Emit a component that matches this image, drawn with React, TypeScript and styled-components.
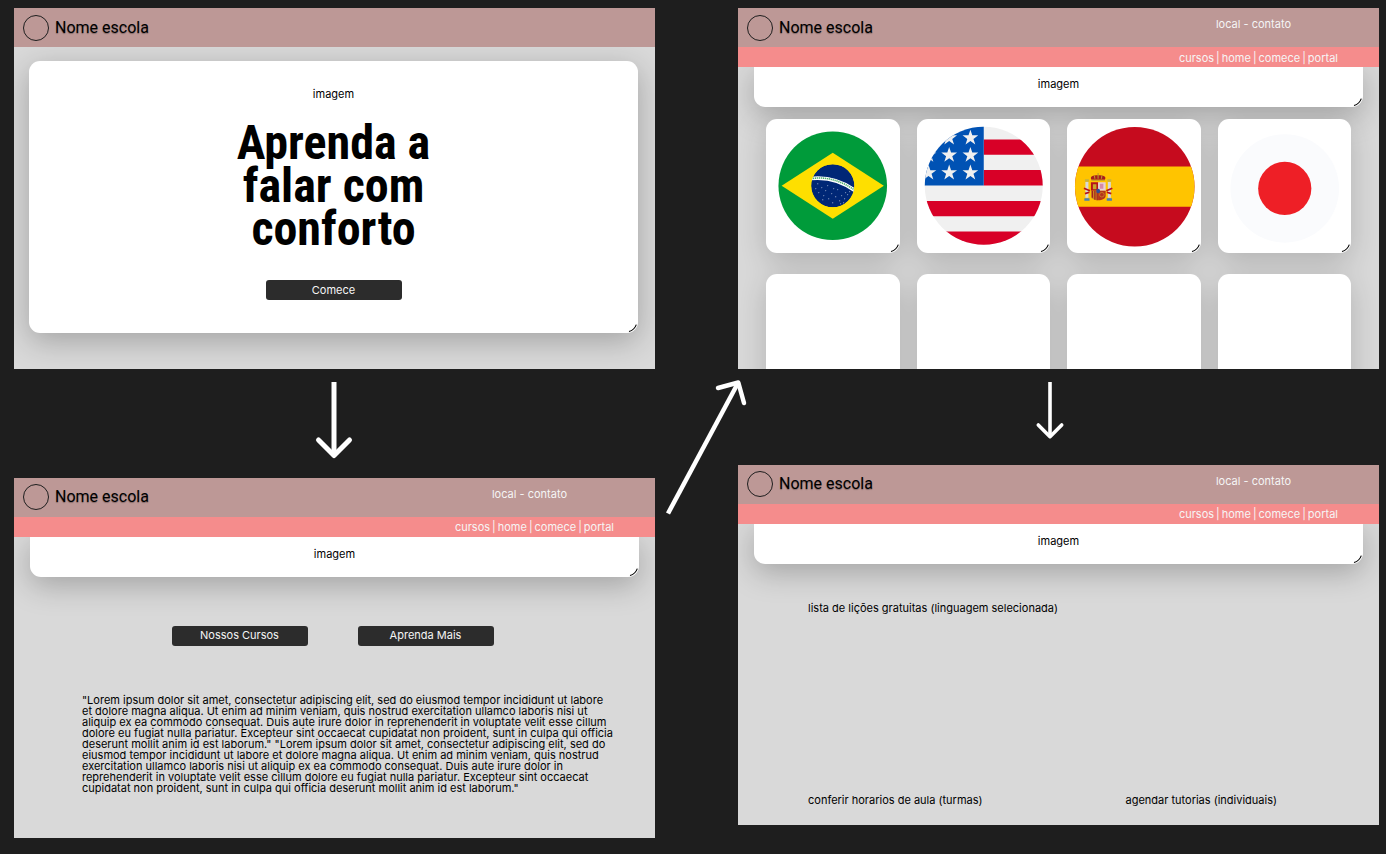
import React from "react";
import styled, { createGlobalStyle } from "styled-components";

const GlobalStyle = createGlobalStyle`
  *, *::before, *::after { box-sizing: border-box; }
  body {
    margin: 0;
    background: #1e1e1e;
    color: #000;
    font-family: Inter, "Liberation Sans", sans-serif;
    font-size: 11px;
    line-height: 11px;
  }
  h1, h2, p, ul { margin: 0; padding: 0; }
`;

const Board = styled.main`
  display: grid;
  grid-template-columns: minmax(0, 1fr) 83px minmax(0, 1fr);
  padding: 8px 7px 15px 14px;
`;

const Column = styled.div`
  display: flex;
  flex-direction: column;
`;

const Screen = styled.section`
  display: flex;
  flex-direction: column;
  aspect-ratio: 16 / 9;
  overflow: hidden;
  background: #d9d9d9;
`;

const DownArrow = styled.div<{ $height: number; $shift?: number }>`
  display: flex;
  justify-content: center;
  height: ${(p) => p.$height}px;
  padding: 13px ${(p) => p.$shift ?? 0}px 0 0;
`;

const Connector = styled.div`
  padding-top: 368px;

  svg {
    display: block;
    overflow: visible;
  }
`;

const TopBar = styled.header`
  display: flex;
  align-items: center;
  flex: none;
  position: relative;
  z-index: 2;
  height: 39px;
  padding: 0 88px 0 9px;
  background: #bd9896;
`;

const Logo = styled.span`
  width: 26px;
  height: 26px;
  margin-right: 6px;
  border: 1px solid #1e1e1e;
  border-radius: 50%;
`;

const SchoolName = styled.h2`
  font: 400 16px/20px Roboto, sans-serif;
  text-shadow: 0 1px 1px rgba(0, 0, 0, 0.3);
`;

const Contact = styled.p`
  align-self: flex-start;
  margin-left: auto;
  padding-top: 11px;
  color: #f5f5f5;
`;

const Menu = styled.nav`
  display: flex;
  justify-content: flex-end;
  align-items: center;
  gap: 2px;
  flex: none;
  position: relative;
  z-index: 2;
  height: 20px;
  padding: 2px 41px 0 0;
  background: #f58c8c;
  color: #f5f5f5;

  a {
    color: inherit;
    text-decoration: none;
  }
`;

const cardShadow = "0 8px 30px rgba(0, 0, 0, 0.25)";

const Hero = styled.div`
  display: flex;
  flex-direction: column;
  align-items: center;
  position: relative;
  margin: 14px 17px 0 15px;
  padding: 28px 0 33px;
  border-radius: 11px;
  background: #fff;
  box-shadow: ${cardShadow};
`;

const HeroTitle = styled.h1`
  max-width: 220px;
  margin: 21px 0 30px;
  font: 700 48px/43px "Roboto Condensed", "Open Sans Condensed", Roboto, sans-serif;
  text-align: center;
`;

const Banner = styled.div`
  flex: none;
  position: relative;
  height: 40px;
  margin: 0 16px;
  padding-top: 12px;
  border-radius: 0 0 11px 11px;
  background: #fff;
  box-shadow: ${cardShadow};
  text-align: center;
`;

const Grip = styled.svg`
  position: absolute;
  right: 0;
  bottom: 0;
`;

const Button = styled.button`
  width: 136px;
  height: 20px;
  padding: 0;
  border: 0;
  border-radius: 3px;
  background: #2c2c2c;
  color: #f5f5f5;
  font: inherit;
`;

const Actions = styled.div`
  display: flex;
  justify-content: center;
  gap: 50px;
  padding: 49px 4px 0 0;
`;

const Copy = styled.p`
  padding: 49px 42px 0 68px;
`;

/* The clip keeps the grid's shadow off the banner above it. */
const Courses = styled.ul`
  display: grid;
  grid-template-columns: repeat(4, minmax(0, 1fr));
  gap: 21px 17px;
  padding: 12px 28px 0;
  list-style: none;
  filter: drop-shadow(0 8px 15px rgba(0, 0, 0, 0.18));
  clip-path: inset(0);
`;

const Course = styled.li`
  position: relative;
  aspect-ratio: 1;
  border-radius: 11px;
  background: #fff;
`;

const Flag = styled.svg`
  display: block;
  width: 100%;
  height: 100%;
`;

const Lessons = styled.div`
  display: flex;
  flex: 1;
  flex-direction: column;
  justify-content: space-between;
  padding: 39px 102px 19px 70px;
`;

const LessonLinks = styled.div`
  display: flex;
  justify-content: space-between;
`;

function CornerGrip() {
  return (
    <Grip width="11" height="11" viewBox="0 0 11 11" aria-hidden="true">
      <path d="M2 9.5C5.4 8.6 8 6.2 9.3 2.6" fill="none" stroke="#000" strokeWidth="1.1" />
    </Grip>
  );
}

function Brand({ contact }: { contact?: boolean }) {
  return (
    <TopBar>
      <Logo />
      <SchoolName>Nome escola</SchoolName>
      {contact && <Contact>local - contato</Contact>}
    </TopBar>
  );
}

const menuItems = ["cursos", "home", "comece", "portal"];

function InnerHeader() {
  return (
    <>
      <Brand contact />
      <Menu>
        {menuItems.map((item, i) => (
          <React.Fragment key={item}>
            {i > 0 && <span>|</span>}
            <a href={`#${item}`}>{item}</a>
          </React.Fragment>
        ))}
      </Menu>
      <Banner>
        imagem
        <CornerGrip />
      </Banner>
    </>
  );
}

const skyStars = [
  [50, 70], [53, 74], [56, 69], [58, 77], [60, 72], [63, 80], [66, 75], [67, 84],
  [70, 78], [72, 71], [74, 82], [76, 77], [79, 80], [80, 74], [82, 76], [78, 84],
  [52, 65], [57, 81], [84, 73], [75, 85], [62, 67], [68, 70],
];

function BrazilFlag() {
  return (
    <Flag viewBox="0 0 134 134" role="img" aria-label="Brasil">
      <clipPath id="sky"><circle cx="67" cy="67" r="21.7" /></clipPath>
      <circle cx="67" cy="67" r="54.5" fill="#009b3a" />
      <path d="M15.7 67L67 34L118.3 67L67 100Z" fill="#fedf00" />
      <g clipPath="url(#sky)">
        <circle cx="67" cy="67" r="21.7" fill="#002776" />
        <path d="M43 60Q69 56.5 91 73" fill="none" stroke="#fff" strokeWidth="3.6" />
        <path d="M47 59.6Q69 57 90 72.2" fill="none" stroke="#4fae6f" strokeWidth="1.6" strokeDasharray="1.3 .7" />
        {skyStars.map(([x, y]) => (
          <circle key={`${x}-${y}`} cx={x} cy={y} r=".5" fill="#dfe6f5" />
        ))}
      </g>
    </Flag>
  );
}

const starPoints = "0,-8.3 1.9,-2.6 7.9,-2.6 3.1,1 4.9,6.7 0,3.2 -4.9,6.7 -3.1,1 -7.9,-2.6 -1.9,-2.6";

function UsaFlag() {
  return (
    <Flag viewBox="0 0 134 134" role="img" aria-label="Estados Unidos">
      <clipPath id="usa"><circle cx="67" cy="67" r="59.2" /></clipPath>
      <g clipPath="url(#usa)">
        <path fill="#f0f0f0" d="M0 0H134V134H0Z" />
        <path fill="#d80027" d="M67 20.7H134V36H67ZM67 51.3H134V66.7H67ZM0 82.2H134V97.6H0ZM0 113H134V134H0Z" />
        <path fill="#0052b4" d="M0 0H67V66.7H0Z" />
        {[19, 36.3, 54].map((y) =>
          [11.5, 32.3, 53.6].map((x) => (
            <polygon key={`${x}-${y}`} points={starPoints} transform={`translate(${x} ${y})`} fill="#f0f0f0" />
          ))
        )}
      </g>
    </Flag>
  );
}

function SpainFlag() {
  return (
    <Flag viewBox="0 0 134 134" role="img" aria-label="Espanha">
      <clipPath id="spain"><circle cx="68" cy="68" r="60" /></clipPath>
      <g clipPath="url(#spain)">
        <path fill="#c60b1e" d="M0 0H134V134H0Z" />
        <path fill="#ffc400" d="M0 47.7H134V88H0Z" />
      </g>
      <path fill="#d8d8d8" d="M18.5 63H21.5V79H18.5ZM41 63H44V79H41Z" />
      <path fill="#c8b13c" d="M18 60.5H22V63H18ZM40.5 60.5H44.5V63H40.5Z" />
      <path fill="#4d7fb0" d="M17.4 79.5H22.6V82H17.4ZM39.9 79.5H45.1V82H39.9Z" />
      <path d="M17 69.5L23 72M45.5 69.5L39.5 72M18 75L22.5 73.5M44.5 75L40 73.5" stroke="#b5121b" strokeWidth="1.8" />
      <path fill="#a61c1e" d="M24.5 61C22.6 57.5 26 56.5 31.2 56.5S39.9 57.5 38 61Z" />
      <path d="M24.5 61.5H38M31.2 54.3V60M27.5 56.8L28 60M35 56.8L34.5 60" stroke="#b89a2c" strokeWidth="1.1" />
      <path fill="#b5121b" d="M24 63.5H31.2V72H24Z" />
      <path fill="#e8cfd8" d="M31.2 63.5H38.8V72H31.2Z" />
      <path fill="#c8a62a" d="M26 65.5H29.5V70.5H26Z" />
      <path fill="#d58aa8" d="M33 65H36.5V70H33Z" />
      <path fill="#c98a20" d="M24 72H31.2V81.5C27 81.5 24 80 24 77Z" />
      <path fill="#b5341b" d="M31.2 72H38.8V77C38.8 80 35.5 81.5 31.2 81.5Z" />
      <path d="M25.5 72V79M28 72V81M30.3 72V81.5" stroke="#a61c1e" strokeWidth="1.2" />
      <circle cx="35" cy="76" r="2.3" fill="none" stroke="#c98a20" strokeWidth=".8" />
      <ellipse cx="31.3" cy="72.2" rx="1.9" ry="2.3" fill="#2a4f9a" />
    </Flag>
  );
}

function JapanFlag() {
  return (
    <Flag viewBox="0 0 134 134" role="img" aria-label="Japão">
      <circle cx="67" cy="69.7" r="54.5" fill="#fafbfd" />
      <circle cx="67" cy="69.7" r="26.7" fill="#ee1f26" />
    </Flag>
  );
}

const courses = [BrazilFlag, UsaFlag, SpainFlag, JapanFlag, null, null, null, null];

export default function App() {
  return (
    <>
      <GlobalStyle />
      <Board>
        <Column>
          <Screen>
            <Brand />
            <Hero>
              <p>imagem</p>
              <HeroTitle>Aprenda a falar com conforto</HeroTitle>
              <Button type="button">Comece</Button>
              <CornerGrip />
            </Hero>
          </Screen>
          <DownArrow $height={109} $shift={1}>
            <svg width="40" height="80" viewBox="0 0 40 80" fill="none" stroke="#fff" strokeWidth="5" aria-hidden="true">
              <path d="M20 0V74" />
              <path d="M4.5 58L20 73.5L35.5 58" strokeLinecap="round" strokeLinejoin="round" />
            </svg>
          </DownArrow>
          <Screen>
            <InnerHeader />
            <Actions>
              <Button type="button">Nossos Cursos</Button>
              <Button type="button">Aprenda Mais</Button>
            </Actions>
            <Copy>
              "Lorem ipsum dolor sit amet, consectetur adipiscing elit, sed do eiusmod tempor incididunt ut
              labore et dolore magna aliqua. Ut enim ad minim veniam, quis nostrud exercitation ullamco laboris
              nisi ut aliquip ex ea commodo consequat. Duis aute irure dolor in reprehenderit in voluptate velit
              esse cillum dolore eu fugiat nulla pariatur. Excepteur sint occaecat cupidatat non proident, sunt
              in culpa qui officia deserunt mollit anim id est laborum." "Lorem ipsum dolor sit amet,
              consectetur adipiscing elit, sed do eiusmod tempor incididunt ut labore et dolore magna aliqua. Ut
              enim ad minim veniam, quis nostrud exercitation ullamco laboris nisi ut aliquip ex ea commodo
              consequat. Duis aute irure dolor in reprehenderit in voluptate velit esse cillum dolore eu fugiat
              nulla pariatur. Excepteur sint occaecat cupidatat non proident, sunt in culpa qui officia deserunt
              mollit anim id est laborum."
            </Copy>
          </Screen>
        </Column>

        <Connector>
          <svg width="83" height="150" viewBox="0 0 83 150" fill="none" stroke="#fff" strokeWidth="4.5" aria-hidden="true">
            <path d="M13 137.5L83 7" />
            <path d="M63 12L83.3 6.5L89 27" strokeLinecap="round" strokeLinejoin="round" />
          </svg>
        </Connector>

        <Column>
          <Screen>
            <InnerHeader />
            <Courses>
              {courses.map((CourseFlag, i) => (
                <Course key={i}>
                  {CourseFlag && <CourseFlag />}
                  <CornerGrip />
                </Course>
              ))}
            </Courses>
          </Screen>
          <DownArrow $height={96} $shift={17}>
            <svg width="30" height="60" viewBox="0 0 30 60" fill="none" stroke="#fff" strokeWidth="3.6" aria-hidden="true">
              <path d="M15 0V55" />
              <path d="M3.3 43L15 54.7L26.7 43" strokeLinecap="round" strokeLinejoin="round" />
            </svg>
          </DownArrow>
          <Screen>
            <InnerHeader />
            <Lessons>
              <p>lista de lições gratuitas (linguagem selecionada)</p>
              <LessonLinks>
                <p>conferir horarios de aula (turmas)</p>
                <p>agendar tutorias (individuais)</p>
              </LessonLinks>
            </Lessons>
          </Screen>
        </Column>
      </Board>
    </>
  );
}
